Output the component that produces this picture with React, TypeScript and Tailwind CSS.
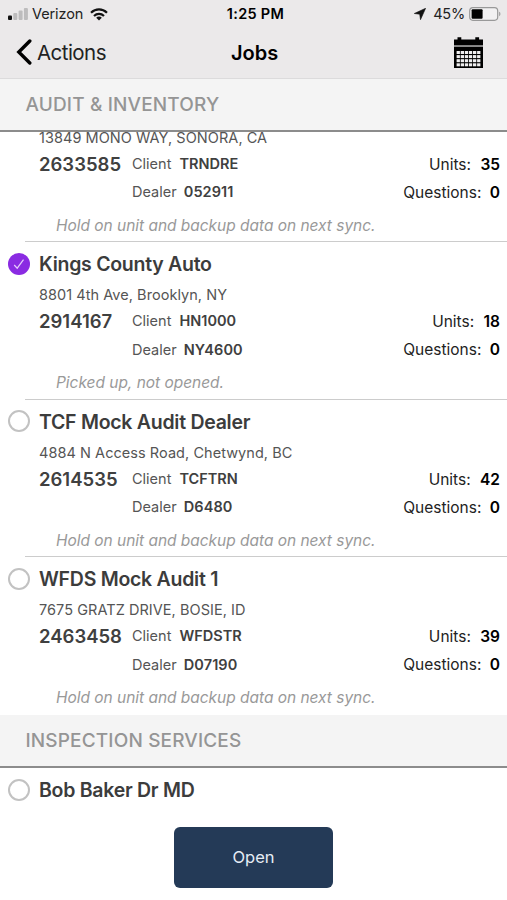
import React, { useState } from 'react';
import { clsx } from 'clsx';

interface Job {
    id: string;
    name?: string;
    address?: string;
    number?: string;
    client?: string;
    dealer?: string;
    units?: number;
    questions?: number;
    note?: string;
}

const auditJobs: Job[] = [
    // title row is scrolled under the section header
    { id: 'mono', address: '13849 MONO WAY, SONORA, CA', number: '2633585', client: 'TRNDRE', dealer: '052911', units: 35, questions: 0, note: 'Hold on unit and backup data on next sync.' },
    { id: 'kings', name: 'Kings County Auto', address: '8801 4th Ave, Brooklyn, NY', number: '2914167', client: 'HN1000', dealer: 'NY4600', units: 18, questions: 0, note: 'Picked up, not opened.' },
    { id: 'tcf', name: 'TCF Mock Audit Dealer', address: '4884 N Access Road, Chetwynd, BC', number: '2614535', client: 'TCFTRN', dealer: 'D6480', units: 42, questions: 0, note: 'Hold on unit and backup data on next sync.' },
    { id: 'wfds', name: 'WFDS Mock Audit 1', address: '7675 GRATZ DRIVE, BOSIE, ID', number: '2463458', client: 'WFDSTR', dealer: 'D07190', units: 39, questions: 0, note: 'Hold on unit and backup data on next sync.' },
];

const inspectionJobs: Job[] = [{ id: 'bob', name: 'Bob Baker Dr MD' }];

const StatusBar = () => (
    <div className="flex h-7 items-center px-2 text-[14.5px] text-[#222]">
        <div className="flex flex-1 items-center">
            <svg width="20" height="12" viewBox="0 0 20 12">
                <rect x="0" y="7.5" width="4" height="4.5" rx="1" fill="#111" />
                <rect x="5.3" y="5" width="4" height="7" rx="1" fill="#bdbcbd" />
                <rect x="10.6" y="2.5" width="4" height="9.5" rx="1" fill="#bdbcbd" />
                <rect x="15.9" y="0" width="4" height="12" rx="1" fill="#bdbcbd" />
            </svg>
            <span className="ml-1 tracking-[-0.1px]">Verizon</span>
            <svg className="ml-[7px]" width="18" height="13" viewBox="0 0 18 13" fill="none" stroke="#111" strokeWidth="2.2">
                <path d="M1 4.7C5.6.2 12.4.2 17 4.7" />
                <path d="M4 8C6.9 5.2 11.1 5.2 14 8" />
                <path d="M6.2 9.7C7.8 8.2 10.2 8.2 11.8 9.7L9 12.6Z" fill="#111" stroke="none" />
            </svg>
        </div>
        <span className="ml-1 font-semibold tracking-[0.3px] text-black">1:25 PM</span>
        <div className="flex flex-1 items-center justify-end">
            <svg className="mr-[7px]" width="12" height="12" viewBox="0 0 12 12">
                <path d="M11.6.3L.3 5.5 5.7 6.2 6.5 11.7Z" fill="#111" stroke="#111" strokeWidth=".6" strokeLinejoin="round" />
            </svg>
            <span className="tracking-[-0.2px]">45%</span>
            <svg className="ml-1 -mr-[3px]" width="33" height="14" viewBox="0 0 33 14">
                <rect x=".7" y=".7" width="28" height="12.6" rx="3.2" fill="#f2f1f2" stroke="#999" strokeWidth="1.2" />
                <rect x="2.6" y="2.2" width="11" height="9.6" rx="1" fill="#000" />
                <path d="M30.2 4.8C31.8 5.4 31.8 8.6 30.2 9.2Z" fill="#999" />
            </svg>
        </div>
    </div>
);

const CalendarIcon = () => (
    <svg width="29" height="31" viewBox="0 0 29 31">
        <path d="M0 2.5H3.5V.3H7.3V2.5H21.3V.3H25.1V2.5H29V8.4H0Z" fill="#000" />
        <path d="M0 8.4H29V10H0Z" fill="#8a8a8a" />
        <path d="M0 10H29V31H0Z" fill="#000" />
        {[14, 18.1, 22.2, 26.3].map((y) =>
            [2.6, 6.7, 10.8, 14.9, 19, 23.1].map((x) => (
                <rect key={`${x}-${y}`} x={x} y={y} width="3.3" height="3" fill="#f0eff0" />
            ))
        )}
    </svg>
);

const NavBar = () => (
    <div className="flex h-[50px] items-center px-4 pb-[2px]">
        <button className="flex flex-1 items-center text-[20.5px] tracking-[-0.55px] text-[#222]">
            <svg className="mr-[5px]" width="16" height="26" viewBox="0 0 16 26" fill="none" stroke="#000" strokeWidth="3.4" strokeLinecap="round">
                <path d="M13.8 2L2.8 13 13.8 24" />
            </svg>
            <span className="pt-0.5">Actions</span>
        </button>
        <h1 className="ml-0.5 pt-px text-[20px] font-semibold text-black">Jobs</h1>
        <div className="flex flex-1 justify-end">
            <span className="mr-2 pt-px">
                <CalendarIcon />
            </span>
        </div>
    </div>
);

const SectionHeader = ({ title }: { title: string }) => (
    <div className="flex h-[53px] shrink-0 items-center border-b-2 border-[#8c8c8c] bg-[#f4f4f4] pt-0.5 pl-[25.5px] text-[19px] font-medium tracking-[0.15px] text-[#959595]">
        {title}
    </div>
);

const Radio = ({ checked, onClick }: { checked: boolean; onClick: () => void }) => (
    <button
        onClick={onClick}
        className={clsx(
            'flex size-[22px] items-center justify-center rounded-full',
            checked ? 'bg-[#8a2be2]' : 'border-2 border-[#c2c2c2]'
        )}
    >
        {checked && (
            <svg width="12" height="12" viewBox="0 0 12 12" fill="none" stroke="#e5cbfb" strokeWidth="1.2">
                <path d="M1.2 7L4.2 10.2 10.5 1.6" />
            </svg>
        )}
    </button>
);

const JobRow = ({ job, checked, onSelect }: { job: Job; checked: boolean; onSelect: () => void }) => (
    <div className="flex shrink-0">
        <div className="flex h-[43px] w-[39px] shrink-0 items-center pl-2">
            {job.name && <Radio checked={checked} onClick={onSelect} />}
        </div>
        <div className="flex-1">
            {job.name && (
                <h2 className="text-[19.5px] leading-[44px] font-semibold tracking-[-0.27px] text-[#3c3c3c]">{job.name}</h2>
            )}
            {job.number && (
                <>
                    <p className="text-[14.5px] leading-[18px] tracking-[0.05px] text-[#555]">{job.address}</p>
                    <div className="flex h-[63px] pt-[3px] pr-[7px]">
                        <span className="w-[93px] text-[18.5px] leading-[28px] font-semibold text-[#404040]">{job.number}</span>
                        <div className="text-[14.5px] leading-[28.5px] text-[#555]">
                            <p>Client <b className="ml-1 font-semibold text-[#404040]">{job.client}</b></p>
                            <p>Dealer <b className="ml-[3px] font-semibold tracking-[0.1px] text-[#404040]">{job.dealer}</b></p>
                        </div>
                        <div className="ml-auto pt-px text-right text-[15.5px] leading-[28px] text-[#222]">
                            <p>Units: <b className="ml-[5px] font-semibold text-black">{job.units}</b></p>
                            <p>Questions: <b className="ml-1 font-semibold text-black">{job.questions}</b></p>
                        </div>
                    </div>
                    <p className="pl-[17px] text-[15.5px] leading-[31.5px] tracking-[-0.03px] text-[#999] italic">{job.note}</p>
                </>
            )}
        </div>
    </div>
);

export default function App() {
    const [selected, setSelected] = useState('kings');

    return (
        <div className="flex h-[900px] w-[507px] flex-col overflow-hidden bg-white font-['Inter',sans-serif]">
            <header className="shrink-0 border-b border-[#dcdbdc] bg-[#ebe9ea]">
                <StatusBar />
                <NavBar />
            </header>
            <SectionHeader title="AUDIT & INVENTORY" />
            <div className="flex h-[583px] shrink-0 flex-col justify-end overflow-hidden pb-[1.5px]">
                {auditJobs.map((job, i) => (
                    <React.Fragment key={job.id}>
                        {i > 0 && <div className="ml-[25px] h-px shrink-0 bg-[#ccc]" />}
                        <JobRow job={job} checked={selected === job.id} onSelect={() => setSelected(job.id)} />
                    </React.Fragment>
                ))}
            </div>
            <SectionHeader title="INSPECTION SERVICES" />
            {inspectionJobs.map((job) => (
                <JobRow key={job.id} job={job} checked={selected === job.id} onSelect={() => setSelected(job.id)} />
            ))}
            <div className="mt-[15px] flex justify-center">
                <button className="h-[61px] w-[159px] rounded-md bg-[#243a57] text-[16.5px] text-[#e6edf5]">Open</button>
            </div>
        </div>
    );
}
